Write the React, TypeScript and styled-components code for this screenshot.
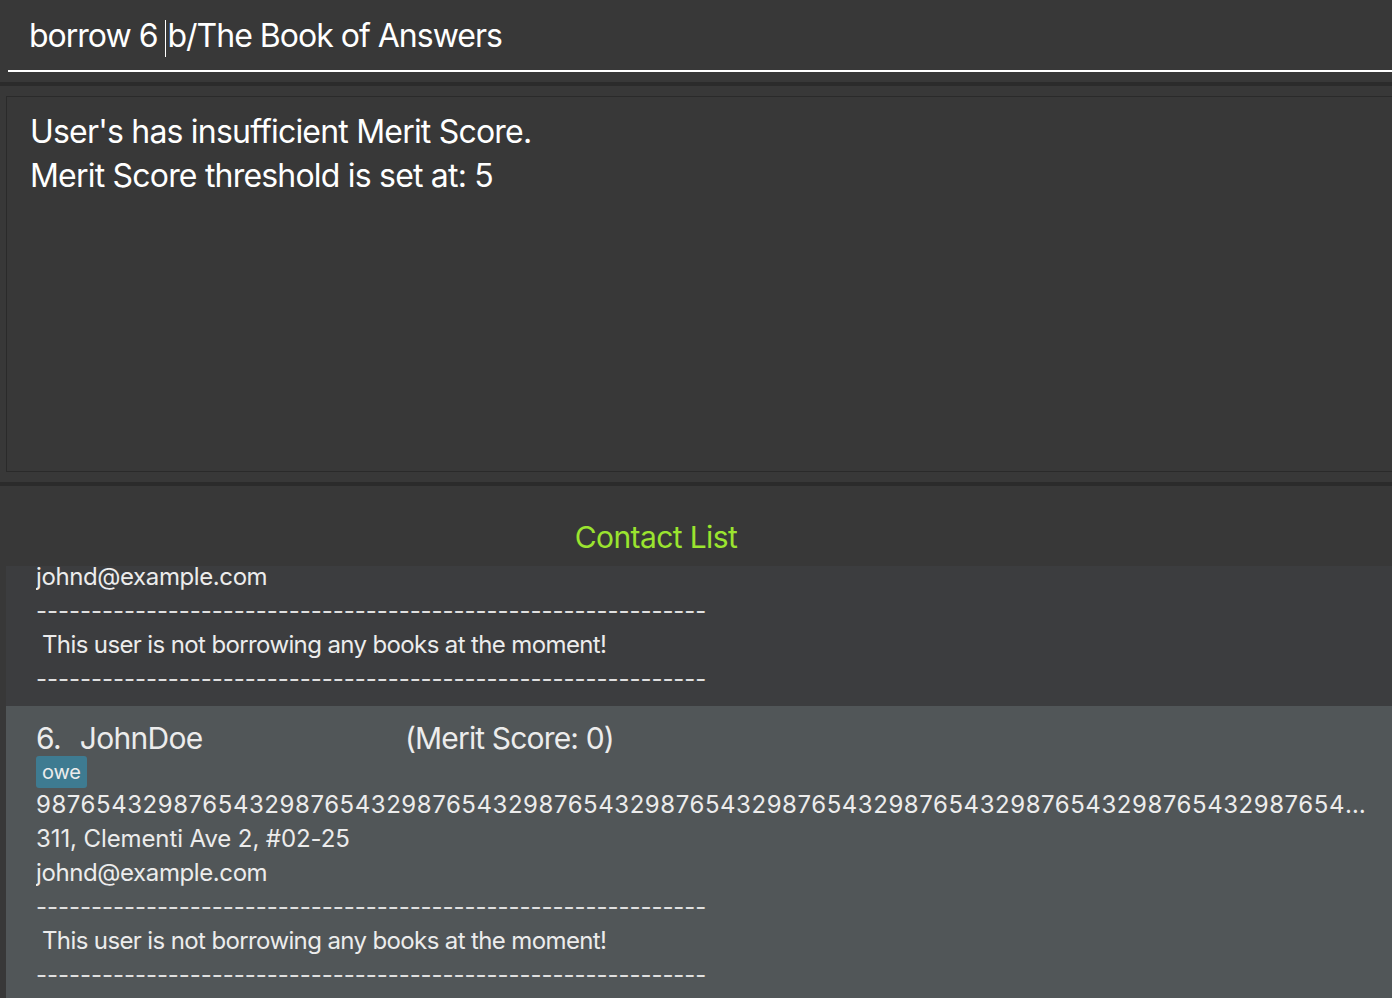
import React, { useLayoutEffect, useRef } from "react";
import styled, { createGlobalStyle } from "styled-components";

const Global = createGlobalStyle`
  html, body { margin: 0; padding: 0; background: #383838; }
  body { font-family: Inter, "Noto Sans", "Liberation Sans", sans-serif; overflow: hidden; }
  * { box-sizing: border-box; }
`;

const Page = styled.div`
  width: 1392px;
  height: 998px;
  background: #383838;
  display: flex;
  flex-direction: column;
  overflow: hidden;
`;

const CommandArea = styled.div`
  height: 82px;
  padding: 0 0 0 8px;
  display: flex;
  flex-direction: column;
`;

const CommandField = styled.div`
  height: 72px;
  border-bottom: 2px solid #ffffff;
  padding: 14px 0 0 21px;
  font-size: 32px;
  line-height: 44px;
  color: #ffffff;
  letter-spacing: -1px;
  white-space: pre;
  display: flex;
  align-items: flex-start;
`;

const Caret = styled.span`
  display: inline-block;
  width: 1px;
  height: 37px;
  margin-top: 6px;
  background: #ffffff;
  margin-right: 1px;
`;

const Band = styled.div`
  height: 4px;
  background: #2b2b2b;
  flex: none;
`;

const ResultArea = styled.div`
  height: 396px;
  padding: 10px 0 10px 6px;
  display: flex;
`;

const ResultBox = styled.div`
  flex: 1;
  border: 1px solid #2a2a2a;
  border-right: none;
  padding: 13px 0 0 23px;
  font-size: 32px;
  line-height: 44px;
  color: #ffffff;
  letter-spacing: -0.8px;
`;

const ListPanel = styled.div`
  flex: 1;
  display: flex;
  flex-direction: column;
  min-height: 0;
`;

const ListTitle = styled.div`
  height: 80px;
  flex: none;
  display: flex;
  align-items: flex-end;
  justify-content: center;
  padding: 0 80px 9px 0;
  font-size: 30px;
  line-height: 40px;
  color: #9be42f;
  letter-spacing: -0.6px;
`;

const ListViewport = styled.div`
  flex: 1;
  min-height: 0;
  margin-left: 6px;
  background: #3c3d3f;
  overflow: hidden;
`;

const Cell = styled.div<{ $selected?: boolean }>`
  background: ${(p) => (p.$selected ? "#515658" : "#3c3d3f")};
  padding: 14px 17px 10px 30px;
  color: #ececec;
`;

const NameRow = styled.div`
  display: flex;
  height: 36px;
  align-items: center;
  font-size: 30px;
  letter-spacing: -0.7px;
  white-space: pre;
`;

const NameBlock = styled.div`
  width: 369px;
  flex: none;
  display: flex;
`;

const Index = styled.span`
  margin-right: 19px;
`;

const Merit = styled.span`
  letter-spacing: -0.85px;
`;

const Tags = styled.div`
  height: 32px;
  display: flex;
  gap: 6px;
`;

const Tag = styled.span`
  background: #3e7b91;
  color: #ececec;
  border-radius: 3px;
  font-size: 20px;
  line-height: 32px;
  padding: 0 6px;
  letter-spacing: -0.2px;
`;

const Line = styled.div<{ $indent?: boolean; $spacing?: number }>`
  font-size: 24px;
  line-height: 34px;
  height: 34px;
  letter-spacing: ${(p) => p.$spacing ?? -0.4}px;
  white-space: pre;
  overflow: hidden;
  text-overflow: ellipsis;
  padding-left: ${(p) => (p.$indent ? "6px" : "0")};
`;

const Dashes = styled.div`
  font-size: 24px;
  line-height: 34px;
  height: 34px;
  color: #e0e0e0;
  letter-spacing: -0.05px;
  white-space: pre;
  overflow: hidden;
`;

const DASH = "-".repeat(61);
const PHONE = "98765432".repeat(20);

type Person = { idx: number; name: string; tags: string[] };

const people: Person[] = [
  { idx: 5, name: "JohnDoe", tags: ["owe"] },
  { idx: 6, name: "JohnDoe", tags: ["owe"] },
];

function PersonCell({ p, selected }: { p: Person; selected?: boolean }) {
  return (
    <Cell $selected={selected}>
      <NameRow>
        <NameBlock>
          <Index>{`${p.idx}.`}</Index>
          <span>{p.name}</span>
        </NameBlock>
        <Merit>(Merit Score: 0)</Merit>
      </NameRow>
      <Tags>
        {p.tags.map((t) => (
          <Tag key={t}>{t}</Tag>
        ))}
      </Tags>
      <Line $spacing={0.55}>{PHONE}</Line>
      <Line $spacing={-0.1}>311, Clementi Ave 2, #02-25</Line>
      <Line $spacing={-0.4}>johnd@example.com</Line>
      <Dashes>{DASH}</Dashes>
      <Line $indent $spacing={-0.62}>
        This user is not borrowing any books at the moment!
      </Line>
      <Dashes>{DASH}</Dashes>
    </Cell>
  );
}

export default function App() {
  const listRef = useRef<HTMLDivElement>(null);
  useLayoutEffect(() => {
    if (listRef.current) listRef.current.scrollTop = 156;
  }, []);
  return (
    <Page>
      <Global />
      <CommandArea>
        <CommandField>
          <span>borrow 6 </span>
          <Caret />
          <span>b/The Book of Answers</span>
        </CommandField>
      </CommandArea>
      <Band />
      <ResultArea>
        <ResultBox>
          <div>User's has insufficient Merit Score.</div>
          <div>Merit Score threshold is set at: 5</div>
        </ResultBox>
      </ResultArea>
      <Band />
      <ListPanel>
        <ListTitle>Contact List</ListTitle>
        <ListViewport ref={listRef}>
          <PersonCell p={people[0]} />
          <PersonCell p={people[1]} selected />
        </ListViewport>
      </ListPanel>
    </Page>
  );
}
